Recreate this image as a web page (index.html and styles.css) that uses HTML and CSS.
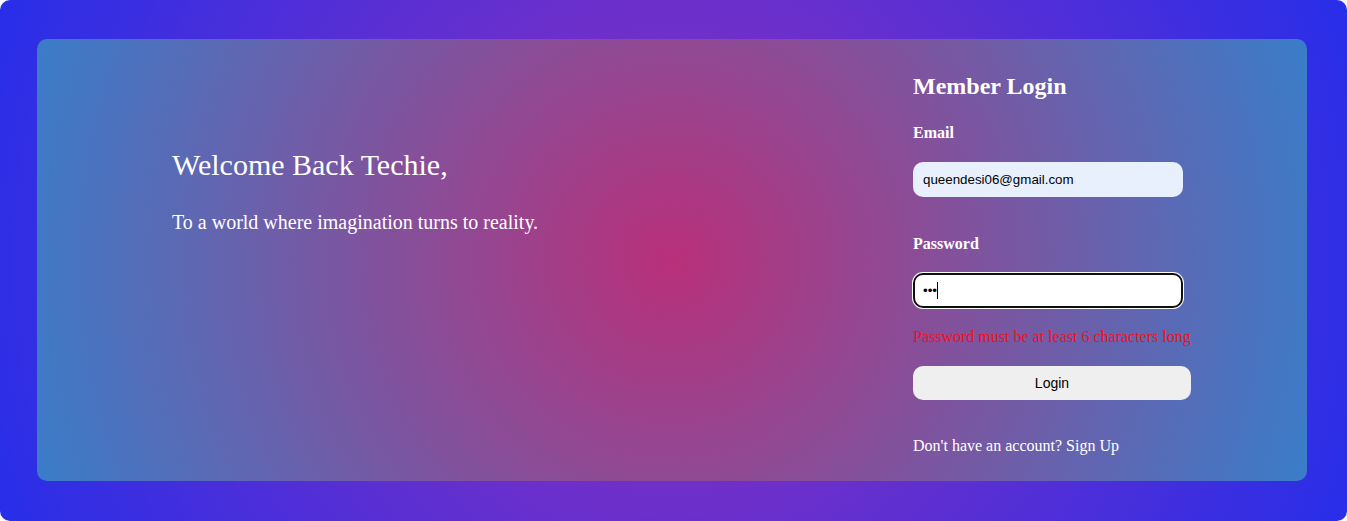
FILE: index.html
```html
<!DOCTYPE html>
<html lang="en">
<head>
<meta charset="utf-8">
<title>Member Login</title>
<link rel="stylesheet" href="styles.css">
</head>
<body>
<div class="page">
  <div class="card">
    <section class="welcome">
      <h1 class="welcome-title">Welcome Back Techie,</h1>
      <p class="welcome-text">To a world where imagination turns to reality.</p>
    </section>
    <form class="login-form">
      <h2 class="form-title">Member Login</h2>
      <label class="field-label" for="email">Email</label>
      <input class="field-input field-autofill" id="email" type="email" value="queendesi06@gmail.com">
      <label class="field-label field-label-second" for="password">Password</label>
      <div class="input-wrap">
        <input class="field-input field-focused" id="password" type="password" value="abc">
        <span class="caret"></span>
      </div>
      <p class="error-text">Password must be at least 6 characters long</p>
      <button class="login-button" type="button">Login</button>
      <p class="signup-text">Don't have an account? <a class="signup-link" href="#">Sign Up</a></p>
    </form>
  </div>
</div>
</body>
</html>
```

FILE: styles.css
```css
html, body {
  margin: 0;
  padding: 0;
  background: #ffffff;
}

body {
  font-family: "Liberation Serif", "Times New Roman", serif;
  color: #ffffff;
}

.page {
  box-sizing: border-box;
  height: 521px;
  padding: 39px 40px 40px 37px;
  border-radius: 10px;
  background: radial-gradient(circle at 50% 50%, #9030bb 0%, #282ee9 100%);
  display: flex;
}

.card {
  flex: 1;
  display: flex;
  border-radius: 10px;
  background: radial-gradient(circle at 50% 50%, #b9307a 0%, #3a7dc9 100%);
}

.welcome {
  flex: 1;
  padding: 109px 0 0 135px;
}

.welcome-title {
  margin: 0;
  font-size: 30px;
  line-height: 34px;
  font-weight: normal;
}

.welcome-text {
  margin: 29px 0 0;
  font-size: 20px;
  line-height: 23px;
}

.login-form {
  width: 278px;
  margin-right: 116px;
  padding-top: 33px;
  display: flex;
  flex-direction: column;
  align-items: flex-start;
}

.form-title {
  margin: 0;
  font-size: 24px;
  line-height: 28px;
  font-weight: bold;
}

.field-label {
  display: block;
  margin-top: 24px;
  font-size: 16px;
  line-height: 18px;
  font-weight: bold;
}

.field-label-second {
  margin-top: 38px;
}

.field-input {
  box-sizing: border-box;
  width: 270px;
  height: 35px;
  margin-top: 20px;
  padding: 0 10px;
  border: none;
  border-radius: 10px;
  font-family: "Liberation Sans", Arial, sans-serif;
  font-size: 13.333px;
  color: #000000;
  background: #ffffff;
  outline: none;
}

.field-autofill {
  background: #e8f0fe;
}

.input-wrap {
  position: relative;
  margin-top: 20px;
}

.input-wrap .field-input {
  margin-top: 0;
}

.field-focused {
  box-shadow: inset 0 0 0 2px #101010, 0 0 0 1px #ffffff;
}

.caret {
  position: absolute;
  left: 24px;
  top: 9px;
  width: 1px;
  height: 17px;
  background: #000000;
}

.error-text {
  margin: 20px 0 0;
  font-size: 16px;
  line-height: 18px;
  color: #f0101c;
  white-space: nowrap;
}

.login-button {
  width: 278px;
  height: 34px;
  margin-top: 20px;
  border: none;
  border-radius: 10px;
  background: #efefef;
  font-family: "Liberation Sans", Arial, sans-serif;
  font-size: 14px;
  color: #000000;
  cursor: pointer;
}

.signup-text {
  margin: 37px 0 0;
  font-size: 16px;
  line-height: 18px;
}

.signup-link {
  color: #ffffff;
  text-decoration: none;
}
```
